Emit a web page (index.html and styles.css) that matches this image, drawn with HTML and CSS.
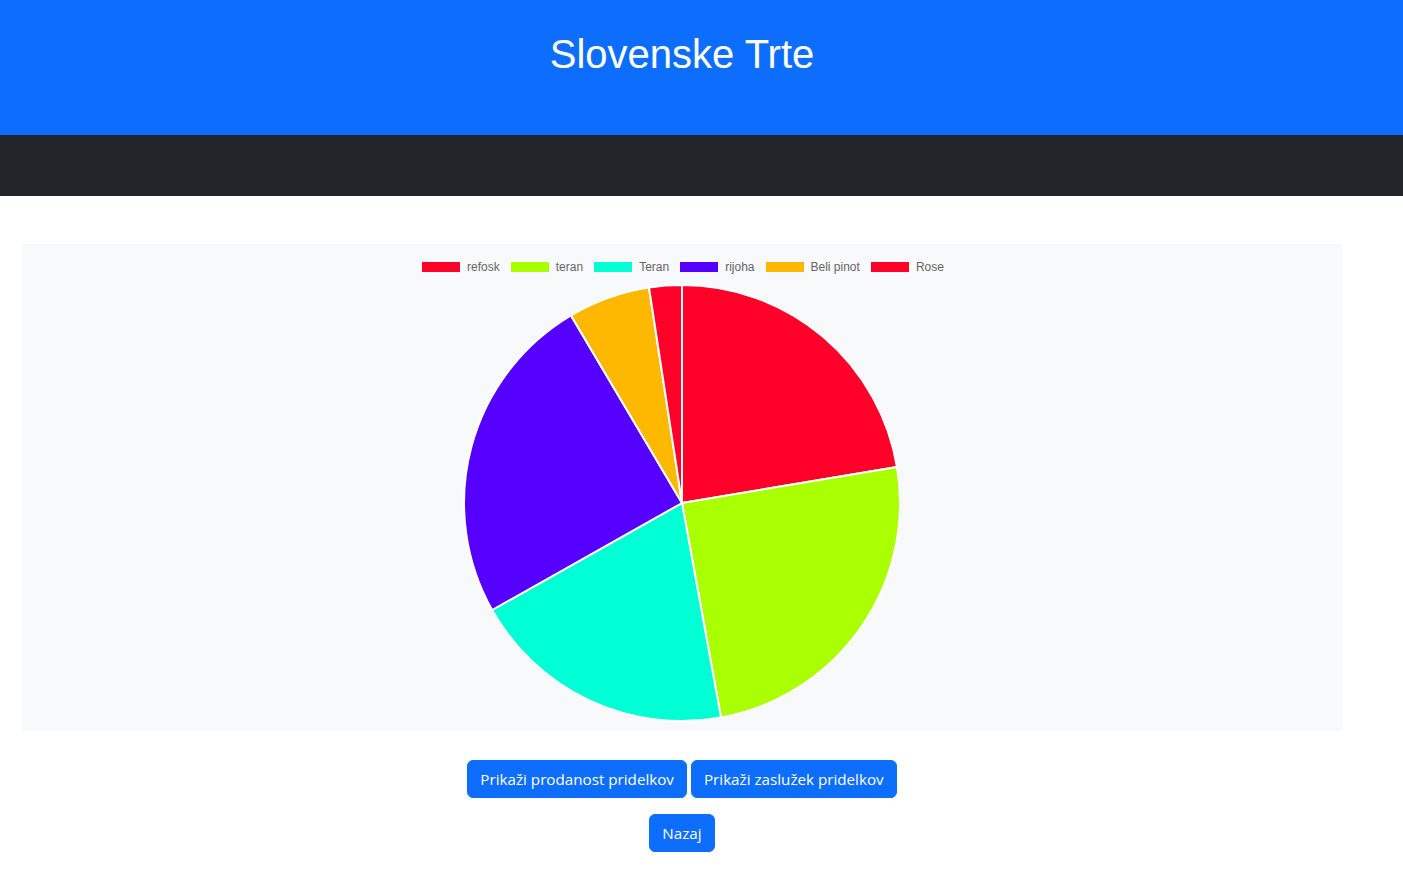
FILE: index.html
```html
<!DOCTYPE html>
<html lang="sl">
<head>
<meta charset="utf-8">
<title>Slovenske Trte</title>
<link rel="stylesheet" href="styles.css">
</head>
<body>
<header class="hero">
  <div class="hero-inner">
    <h1 class="title">Slovenske Trte</h1>
  </div>
</header>
<nav class="navbar"></nav>
<main class="main">
  <section class="chart-box">
    <ul class="legend">
      <li class="legend-item"><span class="swatch c-refosk"></span>refosk</li>
      <li class="legend-item"><span class="swatch c-teran"></span>teran</li>
      <li class="legend-item"><span class="swatch c-teran2"></span>Teran</li>
      <li class="legend-item"><span class="swatch c-rijoha"></span>rijoha</li>
      <li class="legend-item"><span class="swatch c-beli"></span>Beli pinot</li>
      <li class="legend-item"><span class="swatch c-rose"></span>Rose</li>
    </ul>
    <svg class="pie" width="440" height="440" viewBox="0 0 440 440">
      <g stroke="#fff" stroke-width="2" stroke-linejoin="round">
        <path fill="#ff0029" d="M220 220 L220 2 A218 218 0 0 1 435 184 Z"/>
        <path fill="#aaff00" d="M220 220 L435 184 A218 218 0 0 1 259 434.5 Z"/>
        <path fill="#00ffd5" d="M220 220 L259 434.5 A218 218 0 0 1 30.1 327 Z"/>
        <path fill="#5500ff" d="M220 220 L30.1 327 A218 218 0 0 1 109 32.4 Z"/>
        <path fill="#ffb800" d="M220 220 L109 32.4 A218 218 0 0 1 187 4.5 Z"/>
        <path fill="#ff0029" d="M220 220 L187 4.5 A218 218 0 0 1 220 2 Z"/>
      </g>
    </svg>
  </section>
  <div class="actions">
    <div class="btn-row">
      <button class="btn">Prikaži prodanost pridelkov</button>
      <button class="btn">Prikaži zaslužek pridelkov</button>
    </div>
    <div class="btn-row">
      <button class="btn">Nazaj</button>
    </div>
  </div>
</main>
</body>
</html>
```
FILE: styles.css
```css
* { box-sizing: border-box; }
html, body { margin: 0; padding: 0; }
body {
  background: #fff;
  font-family: "Liberation Sans", Arial, sans-serif;
  color: #212529;
}
.hero {
  background: #0d6efd;
  height: 135px;
}
.hero-inner {
  width: 1364px;
  padding-top: 30px;
}
.title {
  margin: 0;
  text-align: center;
  color: #fff;
  font-family: "Liberation Sans", Arial, sans-serif;
  font-weight: 400;
  font-size: 40px;
  line-height: 48px;
}
.navbar {
  background: #212529;
  height: 61px;
}
.main {
  width: 1364px;
  padding: 48px 22px 0;
}
.chart-box {
  background: #f8f9fa;
  height: 487px;
  display: flex;
  flex-direction: column;
  align-items: center;
}
.legend {
  list-style: none;
  margin: 17px 0 0 2px;
  padding: 0;
  display: flex;
  gap: 11px;
  height: 12px;
  font-size: 12px;
  line-height: 12px;
  color: #666;
}
.legend-item {
  display: flex;
  align-items: center;
  gap: 7px;
}
.swatch {
  width: 38px;
  height: 10px;
  display: block;
}
.c-refosk, .c-rose { background: #ff0029; }
.c-teran { background: #aaff00; }
.c-teran2 { background: #00ffd5; }
.c-rijoha { background: #5500ff; }
.c-beli { background: #ffb800; }
.pie {
  display: block;
  margin-top: 10px;
}
.actions {
  padding-top: 29px;
  display: flex;
  flex-direction: column;
  align-items: center;
  gap: 16px;
}
.btn-row {
  display: flex;
  gap: 4px;
}
.btn {
  background: #0d6efd;
  color: #fff;
  border: 1px solid #0d6efd;
  border-radius: 6px;
  padding: 6px 12px;
  font-family: "Open Sans", "Noto Sans", sans-serif;
  font-size: 15.2px;
  line-height: 24px;
  height: 38px;
  cursor: pointer;
}
```
